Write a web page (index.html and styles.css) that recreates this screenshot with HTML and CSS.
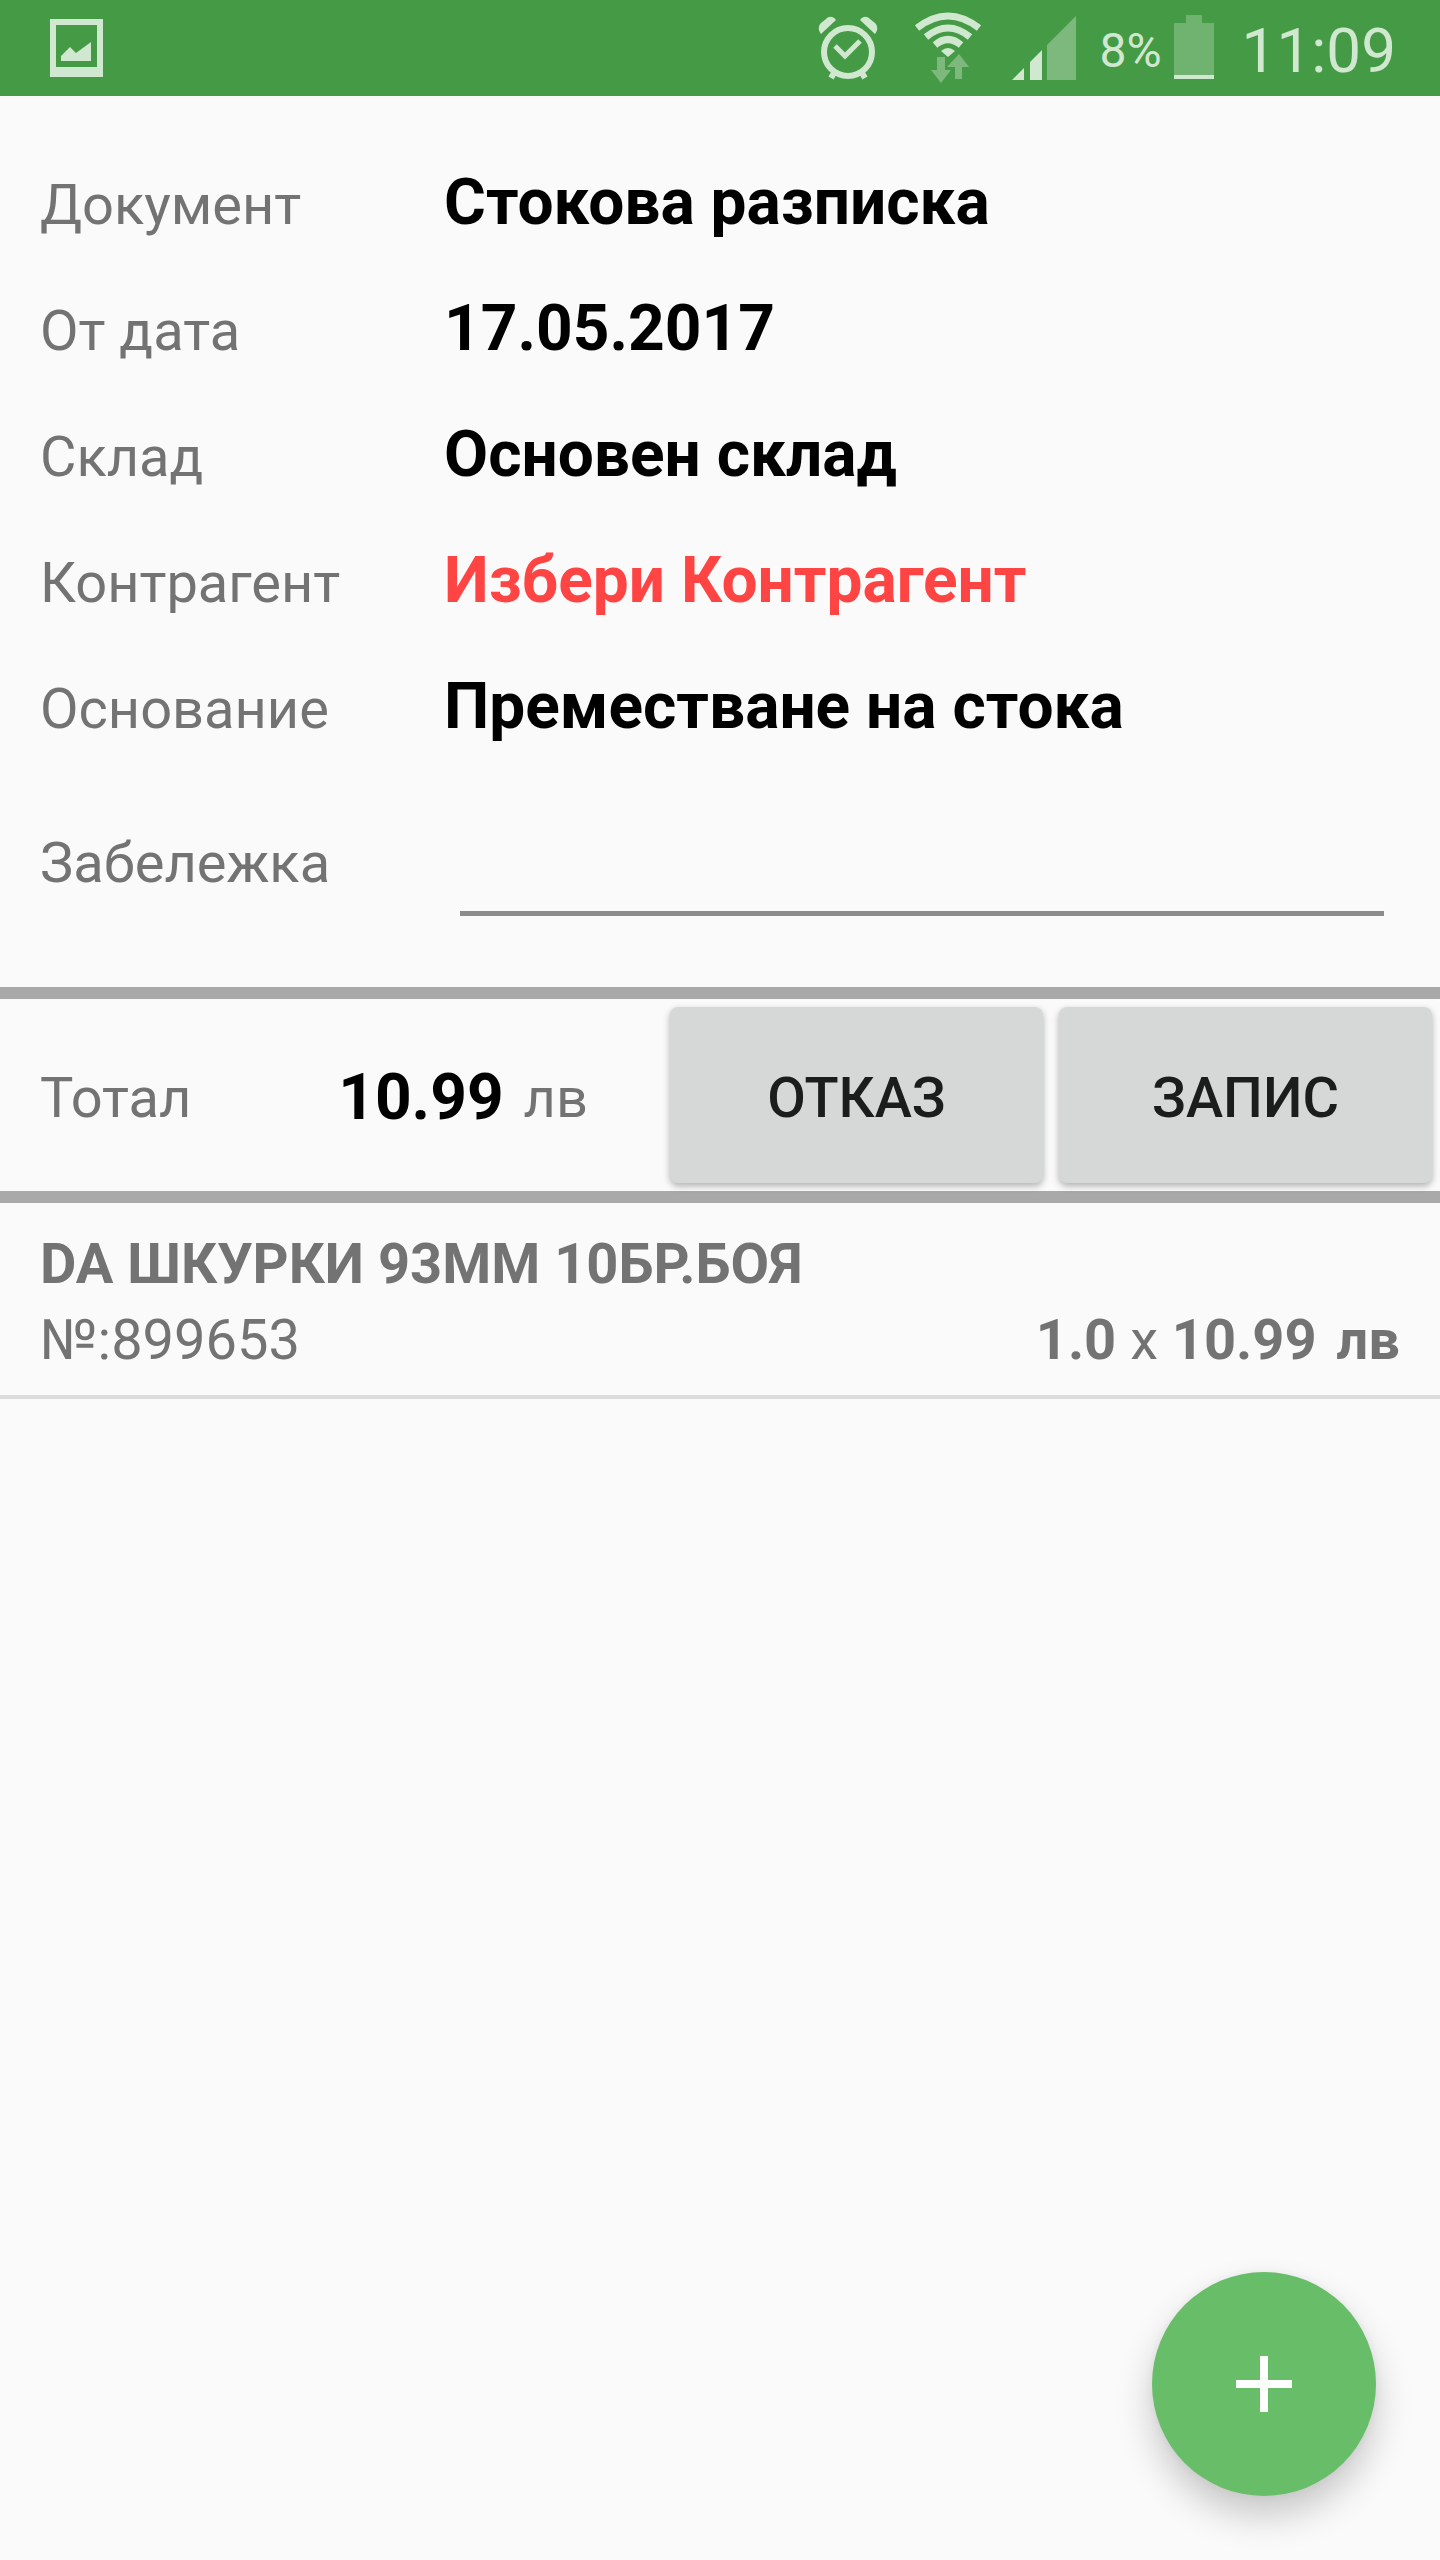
FILE: index.html
```html
<!DOCTYPE html>
<html lang="bg">
<head>
  <meta charset="utf-8">
  <meta name="viewport" content="width=device-width, initial-scale=1">
  <title>Стокова разписка</title>
  <link rel="stylesheet" href="styles.css">
</head>
<body>
  <header class="status-bar">
    <svg class="status-icon" width="53" height="96" viewBox="0 0 53 96" aria-hidden="true">
      <path fill-rule="evenodd" d="M0 19h53v58H0zM6 25v42h41V25z"/>
      <path d="M11 61v-5l9-9 6 6 15-11v19z"/>
    </svg>
    <div class="status-group">
      <svg class="status-icon" width="60" height="96" viewBox="0 0 60 96" aria-hidden="true">
        <circle cx="30" cy="52" r="24" fill="none" stroke="currentColor" stroke-width="6"/>
        <path d="M17 46l10 10 15-15" fill="none" stroke="currentColor" stroke-width="5"/>
        <path d="M3 34c-3-4-3-8 0-11l5-4c3-3 7-3 10 1zM57 34c3-4 3-8 0-11l-5-4c-3-3-7-3-10 1z"/>
        <path d="M16 73l-3 5M44 73l3 5" stroke="currentColor" stroke-width="6"/>
      </svg>
      <svg class="status-icon wifi" width="68" height="96" viewBox="0 0 68 96" aria-hidden="true">
        <g fill="none" stroke="currentColor" stroke-width="7">
          <path d="M3 28Q34 4 65 28"/>
          <path d="M12 37Q34 19 56 37"/>
          <path d="M21 45Q34 34 47 45"/>
        </g>
        <path d="M27 51Q34 45 41 51L34 57z"/>
        <path class="dim" d="M23 57h8v13h6L27 83 17 70h6zM41 79V67h-8l12-13 10 13h-7v12z"/>
      </svg>
      <svg class="status-icon signal" width="64" height="96" viewBox="0 0 64 96" aria-hidden="true">
        <path d="M0 80l12-12v12zM18 80V62l12-12v30z"/>
        <path class="dim" d="M35 80V45l29-29v64z"/>
      </svg>
      <span class="battery-level">8%</span>
      <svg class="status-icon battery" width="40" height="96" viewBox="0 0 40 96" aria-hidden="true">
        <path class="dim battery-body" d="M0 23h12v-8h16v8h12v52H0z"/>
        <path d="M0 75h40v4H0z"/>
      </svg>
      <time class="clock">11:09</time>
    </div>
  </header>

  <main class="document">
    <section class="details">
      <dl class="fields">
        <dt>Документ</dt><dd>Стокова разписка</dd>
        <dt>От дата</dt><dd>17.05.2017</dd>
        <dt>Склад</dt><dd>Основен склад</dd>
        <dt>Контрагент</dt><dd class="missing">Избери Контрагент</dd>
        <dt>Основание</dt><dd>Преместване на стока</dd>
      </dl>
      <div class="note">
        <label for="note">Забележка</label>
        <input id="note" class="note-input" type="text">
      </div>
    </section>

    <section class="total-bar">
      <div class="total">
        <span>Тотал</span>
        <span class="total-sum"><strong class="amount">10.99</strong><span>лв</span></span>
      </div>
      <div class="actions">
        <button type="button" class="action">ОТКАЗ</button>
        <button type="button" class="action">ЗАПИС</button>
      </div>
    </section>

    <ul class="items">
      <li class="item">
        <strong>DA ШКУРКИ 93ММ 10БР.БОЯ</strong>
        <div class="item-row">
          <span>№:899653</span>
          <span class="item-price"><b>1.0</b> x <b>10.99</b><b class="currency">лв</b></span>
        </div>
      </li>
    </ul>
  </main>

  <button type="button" class="fab" aria-label="Добави">
    <svg width="56" height="56" viewBox="0 0 56 56" aria-hidden="true">
      <path d="M24 0h8v24h24v8H32v24h-8V32H0v-8h24z" fill="#fff"/>
    </svg>
  </button>
</body>
</html>
```
FILE: styles.css
```css
* {
  box-sizing: border-box;
}

body {
  margin: 0;
  min-height: 100vh;
  background: #fafafa;
  color: #737373;
  font-family: Roboto, "Noto Sans", sans-serif;
  font-size: 56px;
  line-height: 80px;
}

.status-bar {
  display: flex;
  justify-content: space-between;
  align-items: center;
  height: 96px;
  padding: 0 44px 0 50px;
  background: #459b45;
  color: #d0e7d0;
}

.status-group {
  display: flex;
  align-items: center;
}

.status-icon {
  display: block;
  fill: currentColor;
}

.dim {
  fill: #7db87d;
}

.battery-body {
  fill: #70b371;
}

.wifi {
  margin-left: 36px;
}

.signal {
  margin-left: 30px;
}

.battery-level {
  margin-left: 23px;
  padding-top: 6px;
  font-size: 48px;
}

.battery {
  margin-left: 12px;
}

.clock {
  margin-left: 28px;
  padding-top: 6px;
  font-size: 62px;
}

.details {
  padding: 67px 40px 71px;
}

.fields {
  display: grid;
  grid-template-columns: 404px 1fr;
  grid-auto-rows: 126px;
  align-items: baseline;
  margin: 0;
}

.fields dd {
  margin: 0;
  color: #000;
  font-size: 64px;
  font-weight: 700;
}

.fields .missing {
  color: #ff4444;
}

.note {
  display: grid;
  grid-template-columns: 404px 1fr;
  align-items: center;
  padding-top: 16px;
}

.note-input {
  min-width: 0;
  height: 107px;
  margin: 0 16px;
  padding: 0;
  border: 0;
  border-bottom: 5px solid #8c8c8c;
  background: transparent;
  color: #000;
  font: inherit;
  outline: 0;
}

.total-bar {
  display: flex;
  align-items: center;
  border-top: 12px solid #a9a9a9;
  border-bottom: 12px solid #a9a9a9;
}

.total {
  display: flex;
  flex: 1;
  justify-content: space-between;
  align-items: center;
  padding: 6px 82px 0 40px;
}

.total-sum {
  display: flex;
  align-items: center;
  gap: 20px;
}

.amount {
  color: #000;
  font-size: 64px;
}

.actions {
  display: grid;
  grid-template-columns: 1fr 1fr;
  flex: 0 0 770px;
  gap: 16px;
  padding: 8px 8px 8px 0;
}

.action {
  height: 176px;
  padding: 6px 0 0;
  border: 0;
  border-radius: 8px;
  background: #d6d8d7;
  box-shadow: 0 3px 7px rgba(0, 0, 0, 0.3);
  color: #1b1d1c;
  font: inherit;
  font-weight: 500;
}

.items {
  margin: 0;
  padding: 0;
  list-style: none;
}

.item {
  padding: 23px 40px 17px;
  border-bottom: 4px solid #dcdcdc;
  line-height: 76px;
}

.item-row {
  display: flex;
  justify-content: space-between;
}

.currency {
  margin-left: 20px;
}

.fab {
  position: fixed;
  right: 64px;
  bottom: 64px;
  display: flex;
  align-items: center;
  justify-content: center;
  width: 224px;
  height: 224px;
  padding: 0;
  border: 0;
  border-radius: 50%;
  background: #68bd69;
  box-shadow: 0 20px 36px rgba(0, 0, 0, 0.2), 0 0 12px rgba(0, 0, 0, 0.06);
}
```
